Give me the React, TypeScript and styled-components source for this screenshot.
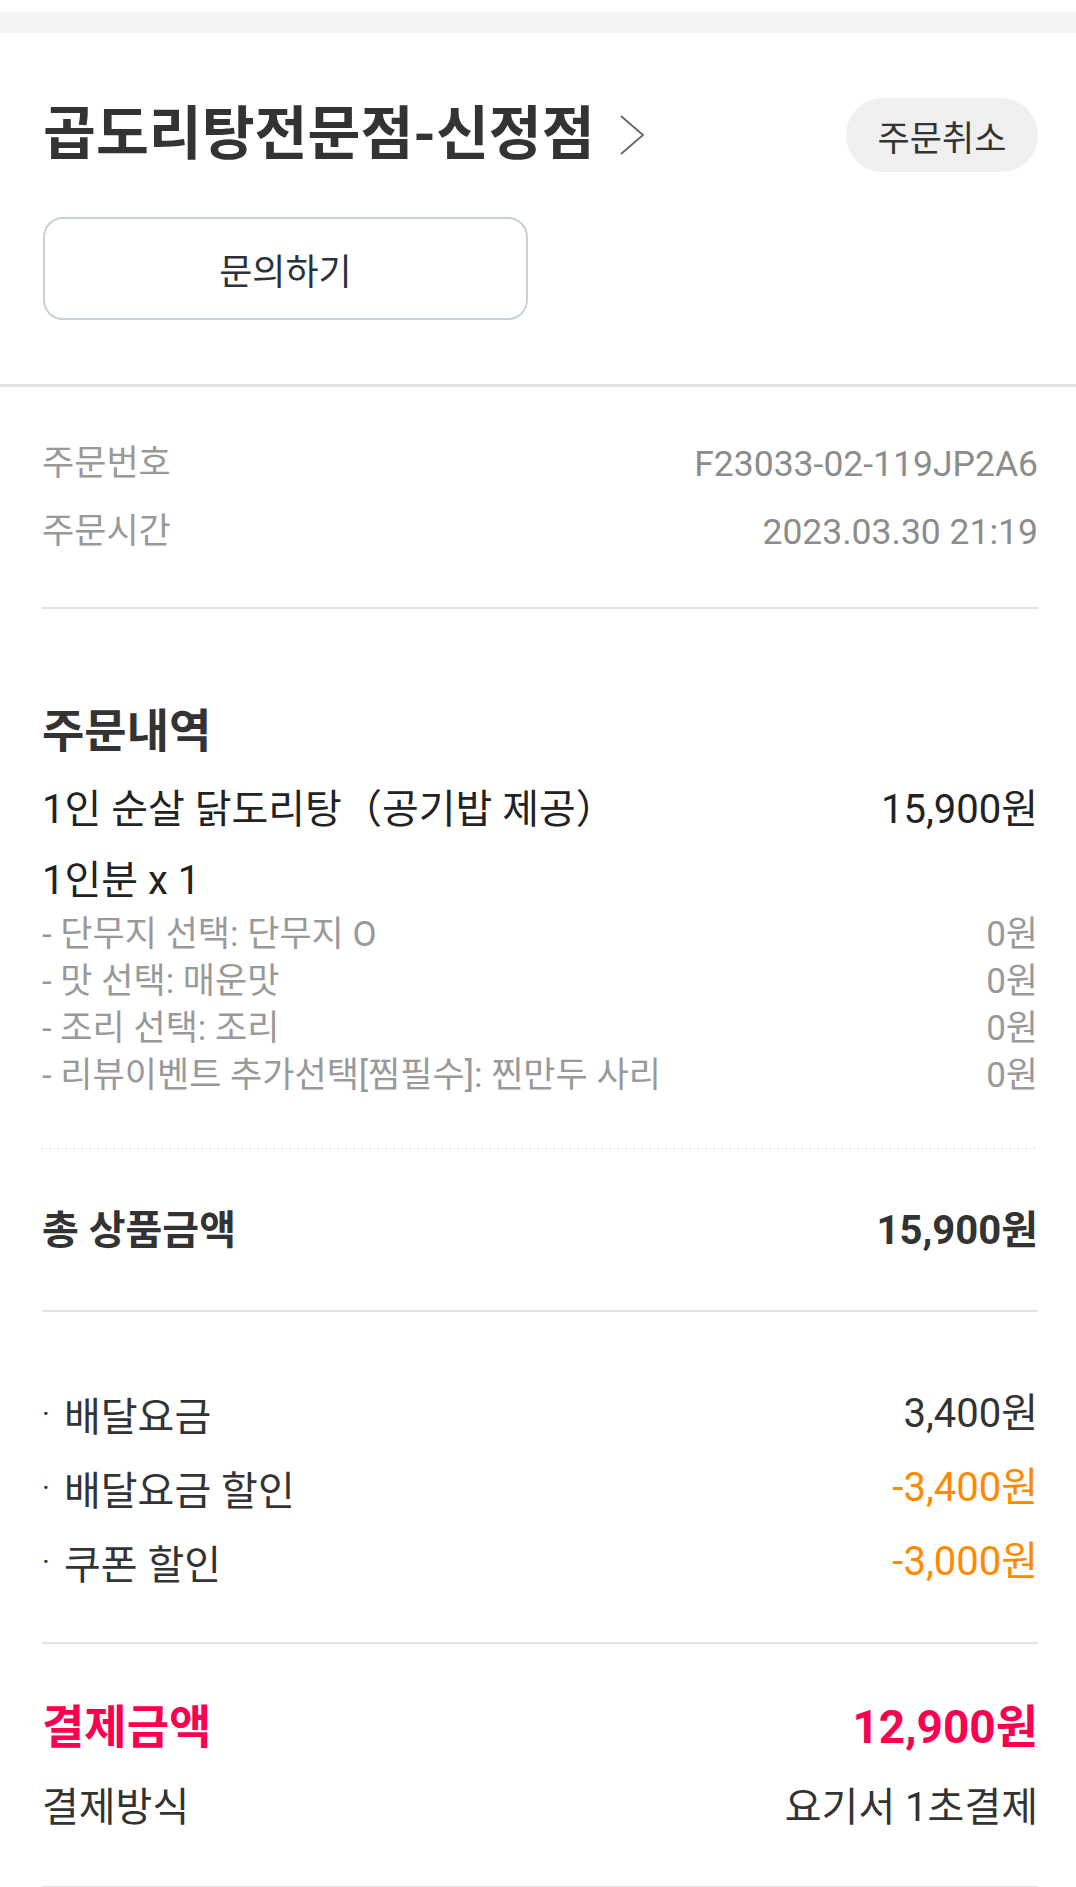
import React from 'react';
import styled, { createGlobalStyle } from 'styled-components';

const GlobalStyle = createGlobalStyle`
  html, body {
    margin: 0;
    padding: 0;
    background: #fff;
  }
  body {
    font-family: Roboto, "Noto Sans CJK KR", sans-serif;
    color: #333;
  }
  * {
    box-sizing: border-box;
  }
`;

const Page = styled.div`
  width: 100%;
  background: #fff;
`;

const TopBand = styled.div`
  margin-top: 12px;
  height: 21px;
  background: #f3f4f6;
`;

const Header = styled.header`
  padding: 65px 38px 64px 43px;
  border-bottom: 3px solid #e1e1e1;
`;

const TitleRow = styled.div`
  display: flex;
  align-items: center;
  justify-content: space-between;
  height: 74px;
`;

const StoreLink = styled.a`
  display: flex;
  align-items: center;
  gap: 24px;
  color: inherit;
  text-decoration: none;
`;

const StoreName = styled.h1`
  margin: 0;
  font-size: 57.5px;
  font-weight: 700;
  line-height: 1;
  color: #333;
  white-space: nowrap;
`;

const CancelButton = styled.button`
  width: 192px;
  height: 74px;
  border: none;
  border-radius: 37px;
  background: #efefef;
  font-family: inherit;
  font-size: 35px;
  color: #333;
  padding: 0;
`;

const InquiryButton = styled.button`
  display: block;
  margin-top: 45px;
  width: 485px;
  height: 103px;
  border: 2px solid #c7d1da;
  border-radius: 20px;
  background: #fff;
  font-family: inherit;
  font-size: 36px;
  color: #2b323a;
  padding: 0;
`;

const Body = styled.main`
  padding: 0 38px 0 42px;
`;

const Section = styled.section<{ $pad: string; $rule?: boolean }>`
  padding: ${(p) => p.$pad};
  border-bottom: ${(p) => (p.$rule === false ? 'none' : '2px solid #e4e4e4')};
`;

const Row = styled.div<{ $h: number; $mt?: number }>`
  display: flex;
  align-items: center;
  justify-content: space-between;
  height: ${(p) => p.$h}px;
  margin-top: ${(p) => p.$mt || 0}px;
  white-space: nowrap;
`;

const Text = styled.span<{ $size: number; $color?: string; $bold?: boolean }>`
  font-size: ${(p) => p.$size}px;
  color: ${(p) => p.$color || '#333'};
  font-weight: ${(p) => (p.$bold ? 700 : 400)};
  line-height: 1.2;
`;

const SectionTitle = styled.h2`
  margin: 0 0 20px;
  height: 60px;
  line-height: 60px;
  font-size: 46px;
  font-weight: 700;
  color: #333;
`;

const OptionList = styled.ul`
  list-style: none;
  margin: 0;
  padding: 0;
`;

const OptionItem = styled.li`
  display: flex;
  justify-content: space-between;
  align-items: center;
  height: 47px;
  font-size: 35px;
  color: #999;
  white-space: nowrap;
`;

const OptionGap = styled.div`
  height: 53px;
`;

const DottedRule = styled.div`
  height: 1px;
  background-image: linear-gradient(to right, #c2c2c2 1px, transparent 1px);
  background-size: 4px 1px;
`;

const FeeLabel = styled.span`
  display: flex;
  align-items: center;
  font-size: 40px;
  color: #333;
`;

const Bullet = styled.span`
  width: 22px;
  font-size: 30px;
  line-height: 1;
  color: #333;
`;

const Chevron = () => (
  <svg width="26" height="40" viewBox="0 0 26 40" fill="none">
    <polyline points="2,1 24,20 2,39" stroke="#666" strokeWidth="1.8" fill="none" />
  </svg>
);

const options = [
  '- 단무지 선택: 단무지 O',
  '- 맛 선택: 매운맛',
  '- 조리 선택: 조리',
  '- 리뷰이벤트 추가선택[찜필수]: 찐만두 사리',
];

const fees = [
  { label: '배달요금', value: '3,400원', discount: false },
  { label: '배달요금 할인', value: '-3,400원', discount: true },
  { label: '쿠폰 할인', value: '-3,000원', discount: true },
];

export default function App() {
  return (
    <Page>
      <GlobalStyle />
      <TopBand />
      <Header>
        <TitleRow>
          <StoreLink>
            <StoreName>곱도리탕전문점-신정점</StoreName>
            <Chevron />
          </StoreLink>
          <CancelButton>주문취소</CancelButton>
        </TitleRow>
        <InquiryButton>문의하기</InquiryButton>
      </Header>

      <Body>
        <Section $pad="43px 0 41px">
          <Row $h={68}>
            <Text $size={35} $color="#999">주문번호</Text>
            <Text $size={35.5} $color="#8c8c8c">F23033-02-119JP2A6</Text>
          </Row>
          <Row $h={68}>
            <Text $size={35} $color="#999">주문시간</Text>
            <Text $size={35.5} $color="#8c8c8c">2023.03.30 21:19</Text>
          </Row>
        </Section>

        <Section $pad="92px 0 0" $rule={false}>
          <SectionTitle>주문내역</SectionTitle>
          <Row $h={58}>
            <Text $size={40} $color="#222">1인 순살 닭도리탕（공기밥 제공）</Text>
            <Text $size={40} $color="#222">15,900원</Text>
          </Row>
          <Row $h={52} $mt={16}>
            <Text $size={40} $color="#222">1인분 x 1</Text>
          </Row>
          <OptionList>
            {options.map((o) => (
              <OptionItem key={o}>
                <span>{o}</span>
                <span>0원</span>
              </OptionItem>
            ))}
          </OptionList>
          <OptionGap />
          <DottedRule />
        </Section>

        <Section $pad="52px 0 49px">
          <Row $h={60}>
            <Text $size={40} $bold>총 상품금액</Text>
            <Text $size={40} $bold>15,900원</Text>
          </Row>
        </Section>

        <Section $pad="65px 0 43px">
          {fees.map((f) => (
            <Row $h={74} key={f.label}>
              <FeeLabel>
                <Bullet>·</Bullet>
                {f.label}
              </FeeLabel>
              <Text $size={40} $color={f.discount ? '#ff8a00' : '#333'}>{f.value}</Text>
            </Row>
          ))}
        </Section>

        <Section $pad="52px 0 46px">
          <Row $h={64}>
            <Text $size={46} $bold $color="#fa0050">결제금액</Text>
            <Text $size={46} $bold $color="#fa0050">12,900원</Text>
          </Row>
          <Row $h={64} $mt={16}>
            <Text $size={40}>결제방식</Text>
            <Text $size={40}>요기서 1초결제</Text>
          </Row>
        </Section>
      </Body>
    </Page>
  );
}
